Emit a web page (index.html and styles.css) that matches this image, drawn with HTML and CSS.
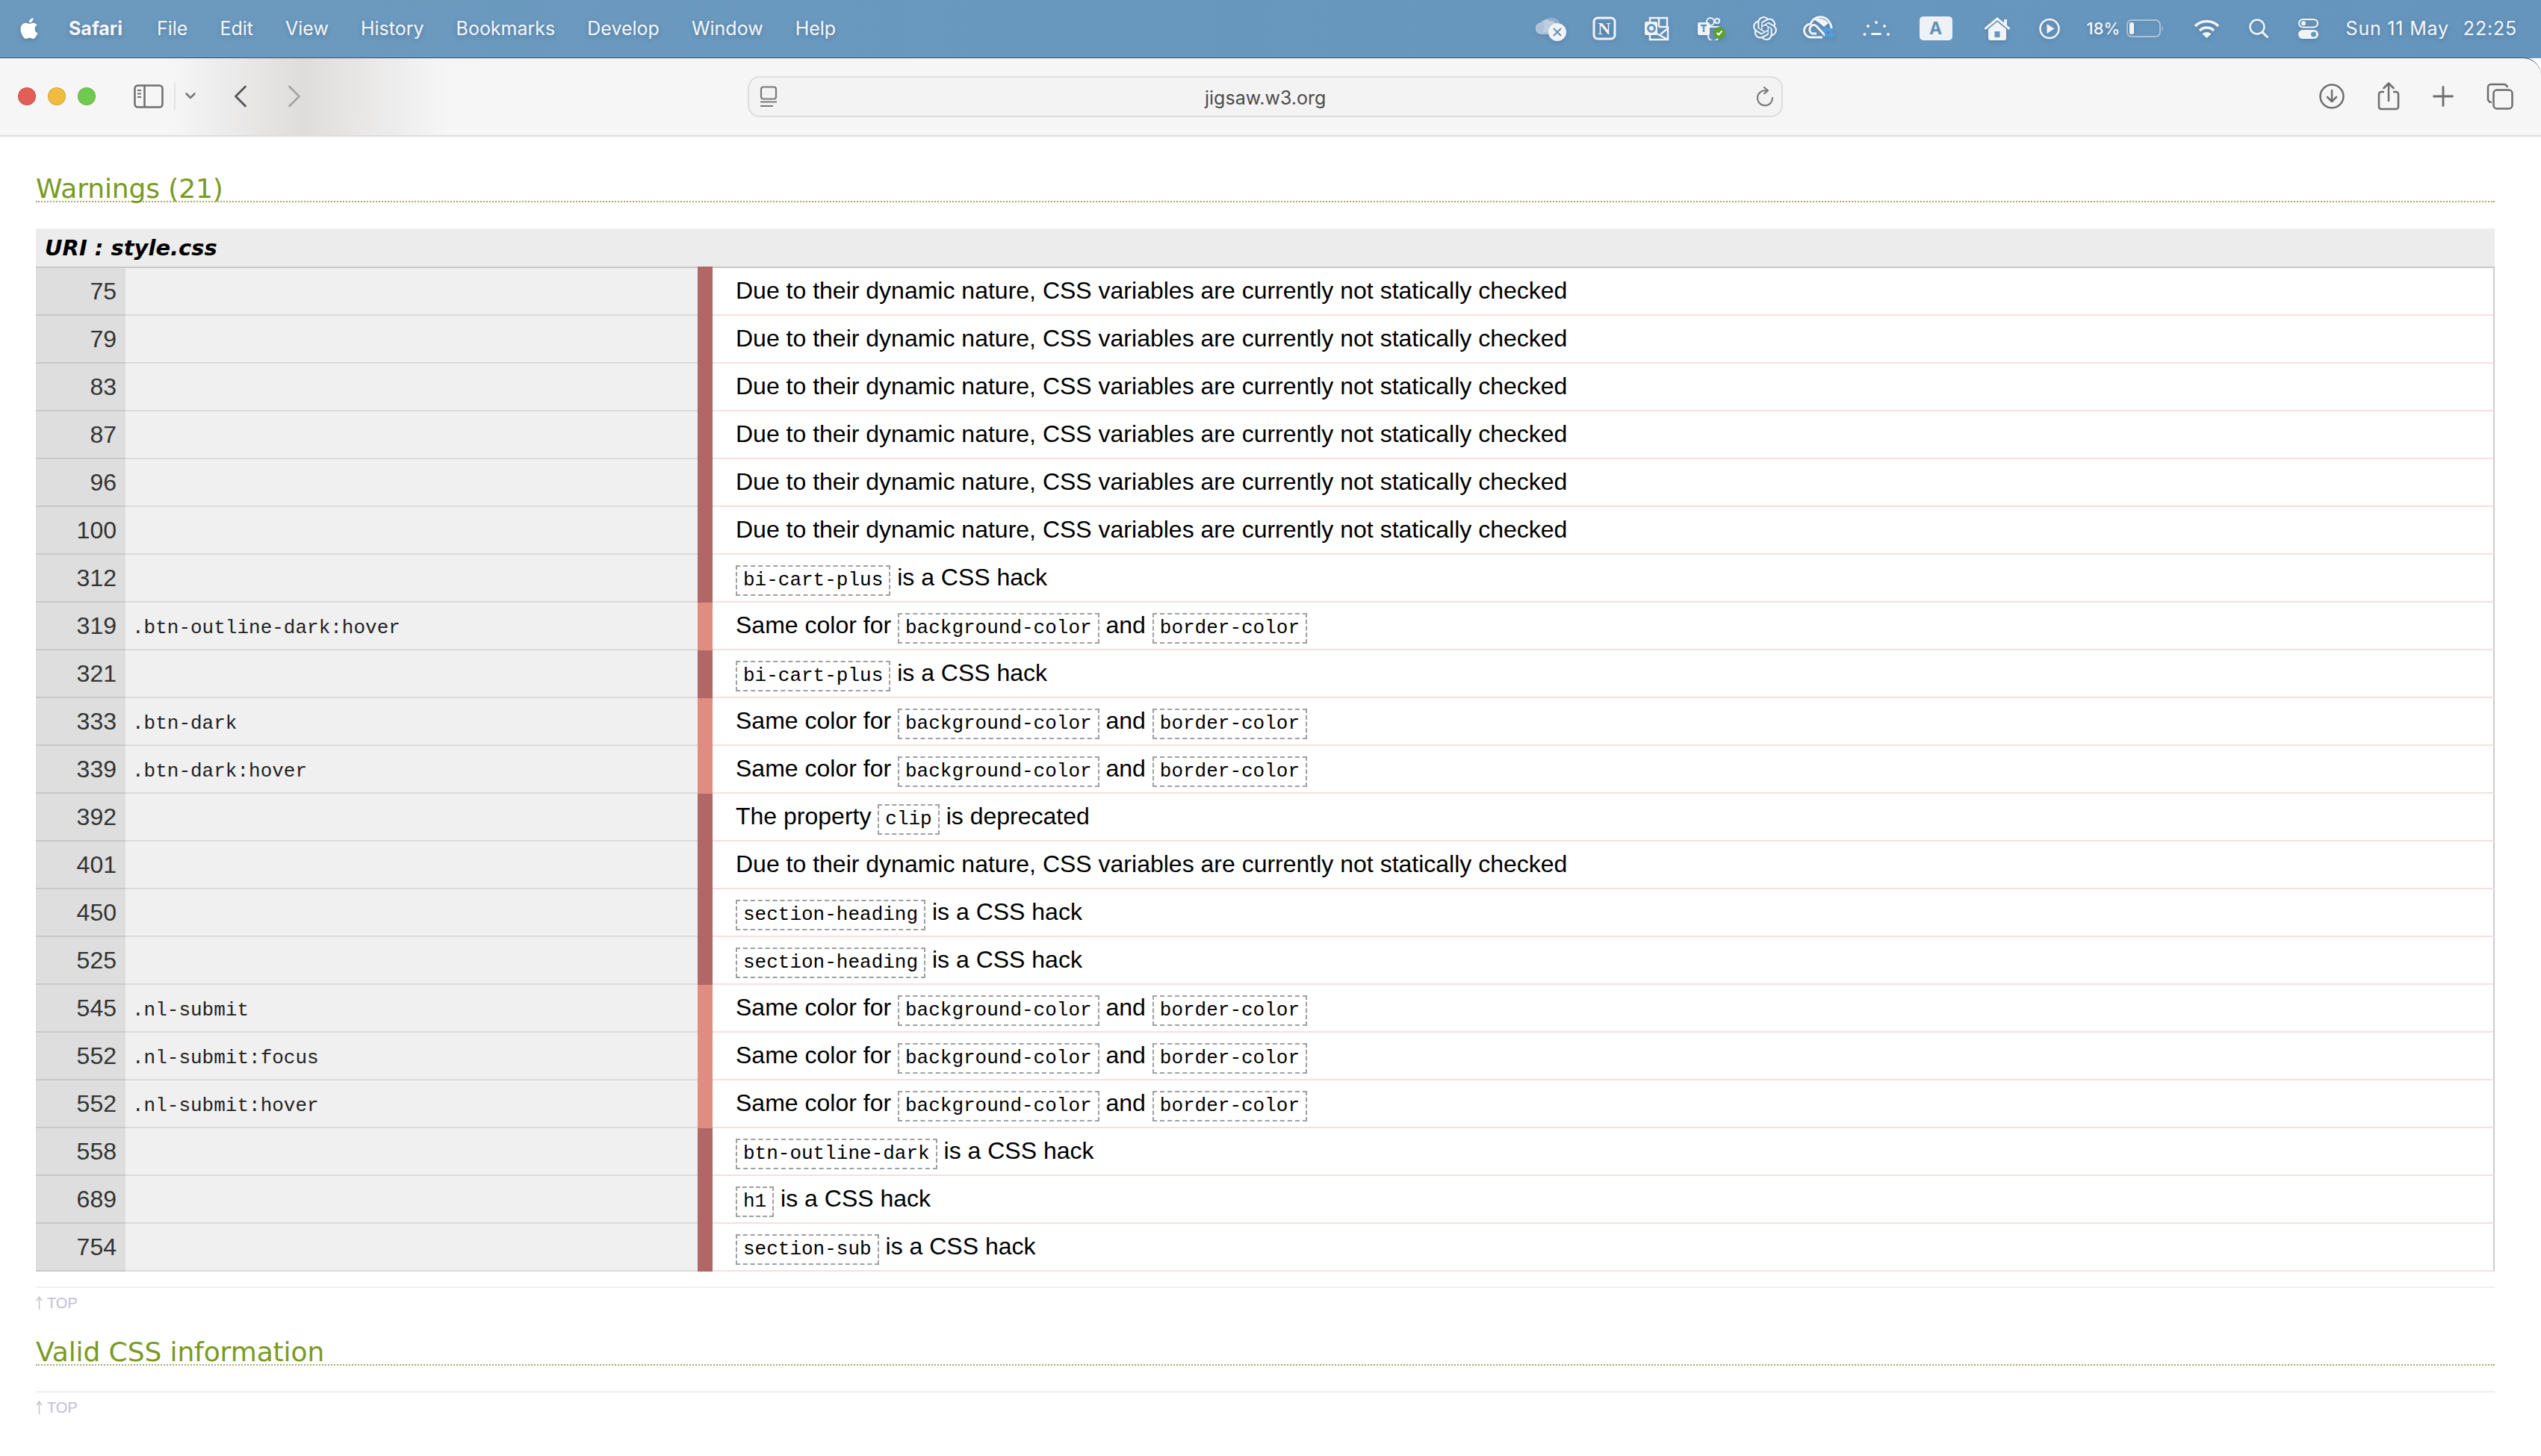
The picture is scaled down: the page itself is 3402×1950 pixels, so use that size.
FILE: index.html
```html
<!DOCTYPE html>
<html lang="en">
<head>
<meta charset="utf-8">
<title>W3C CSS Validator results</title>
<link rel="stylesheet" href="styles.css">
</head>
<body>
<header class="menubar">
  <nav class="menus">
    <svg class="apple" viewBox="0 0 24 24"><path fill="#fff" d="M12.152 6.896c-.948 0-2.415-1.078-3.96-1.04-2.04.027-3.91 1.183-4.961 3.014-2.117 3.675-.546 9.103 1.519 12.09 1.013 1.454 2.208 3.09 3.792 3.039 1.52-.065 2.09-.987 3.935-.987 1.831 0 2.35.987 3.96.948 1.637-.026 2.676-1.48 3.676-2.948 1.156-1.688 1.636-3.325 1.662-3.415-.039-.013-3.182-1.221-3.22-4.857-.026-3.04 2.48-4.494 2.597-4.559-1.429-2.09-3.623-2.324-4.39-2.376-2-.156-3.675 1.09-4.61 1.09zM15.53 3.83c.843-1.012 1.4-2.427 1.245-3.83-1.207.052-2.662.805-3.532 1.818-.78.896-1.454 2.338-1.273 3.714 1.338.104 2.715-.688 3.559-1.701"/></svg>
    <span class="app">Safari</span>
    <span>File</span><span>Edit</span><span>View</span><span>History</span><span>Bookmarks</span><span>Develop</span><span>Window</span><span>Help</span>
  </nav>
  <div class="status">
    <svg width="42" height="36" viewBox="0 0 42 36"><path fill="#dfe8f0" opacity=".35" d="M12 8a11 9 0 0 1 20 2l-6 13H10z"/><path fill="#dfe8f0" opacity=".6" d="M8 26a8 8 0 0 1-1-16 8 8 0 0 1 12-2 9 9 0 0 1 10 8v10z"/><circle cx="29" cy="23" r="12" fill="#f1f4f7"/><path d="M24 18l10 10M34 18l-10 10" stroke="#6a8eab" stroke-width="2" fill="none"/></svg>
    <svg width="32" height="32" viewBox="0 0 32 32"><rect x="2" y="2" width="28" height="28" rx="5" fill="none" stroke="#f1f4f7" stroke-width="3"/><text x="16" y="24" class="svg-n">N</text></svg>
    <svg width="33" height="33" viewBox="0 0 33 33"><path fill="none" stroke="#f1f4f7" stroke-width="2.500" d="M7 8V2h23v12M19 2v12M7 20v11h24V14H19M14 22l17 9M31 16L21 24"/><rect x="0" y="7" width="17" height="18" rx="2" fill="#f1f4f7"/><circle cx="9" cy="16" r="4.500" fill="none" stroke="#6595bd" stroke-width="3"/></svg>
    <svg width="38" height="32" viewBox="0 0 38 32"><circle cx="17" cy="7" r="5" fill="none" stroke="#f1f4f7" stroke-width="2"/><circle cx="26" cy="6" r="3" fill="none" stroke="#f1f4f7" stroke-width="2"/><path d="M14 14h14v12a7 7 0 0 1-14 0z" fill="none" stroke="#f1f4f7" stroke-width="2"/><rect x="0" y="8" width="16" height="17" rx="2" fill="#f1f4f7"/><path d="M4 12h8M8 12v9" stroke="#6595bd" stroke-width="2.500"/><circle cx="29" cy="22" r="8" fill="#5aa02c"/><path d="M25.500 22l2.500 2.500 4.500-5" stroke="#fff" stroke-width="2" fill="none"/></svg>
    <svg width="32" height="32" viewBox="0 0 24 24"><path fill="#f1f4f7" d="M22.2819 9.8211a5.9847 5.9847 0 0 0-.5157-4.9108 6.0462 6.0462 0 0 0-6.5098-2.9A6.0651 6.0651 0 0 0 4.9807 4.1818a5.9847 5.9847 0 0 0-3.9977 2.9 6.0462 6.0462 0 0 0 .7427 7.0966 5.98 5.98 0 0 0 .511 4.9107 6.051 6.051 0 0 0 6.5146 2.9001A5.9847 5.9847 0 0 0 13.2599 24a6.0557 6.0557 0 0 0 5.7718-4.2058 5.9894 5.9894 0 0 0 3.9977-2.9001 6.0557 6.0557 0 0 0-.7475-7.0729zm-9.022 12.6081a4.4755 4.4755 0 0 1-2.8764-1.0408l.1419-.0804 4.7783-2.7582a.7948.7948 0 0 0 .3927-.6813v-6.7369l2.02 1.1686a.071.071 0 0 1 .038.052v5.5826a4.504 4.504 0 0 1-4.4945 4.4944zm-9.6607-4.1254a4.4708 4.4708 0 0 1-.5346-3.0137l.142.0852 4.783 2.7582a.7712.7712 0 0 0 .7806 0l5.8428-3.3685v2.3324a.0804.0804 0 0 1-.0332.0615L9.74 19.9502a4.4992 4.4992 0 0 1-6.1408-1.6464zM2.3408 7.8956a4.485 4.485 0 0 1 2.3655-1.9728V11.6a.7664.7664 0 0 0 .3879.6765l5.8144 3.3543-2.0201 1.1685a.0757.0757 0 0 1-.071 0l-4.8303-2.7865A4.504 4.504 0 0 1 2.3408 7.872zm16.5963 3.8558L13.1038 8.364 15.1192 7.2a.0757.0757 0 0 1 .071 0l4.8303 2.7913a4.4944 4.4944 0 0 1-.6765 8.1042v-5.6772a.79.79 0 0 0-.407-.667zm2.0107-3.0231l-.142-.0852-4.7735-2.7818a.7759.7759 0 0 0-.7854 0L9.409 9.2297V6.8974a.0662.0662 0 0 1 .0284-.0615l4.8303-2.7866a4.4992 4.4992 0 0 1 6.6802 4.66zM8.3065 12.863l-2.02-1.1638a.0804.0804 0 0 1-.038-.0567V6.0742a4.4992 4.4992 0 0 1 7.3757-3.4537l-.142.0805L8.704 5.459a.7948.7948 0 0 0-.3927.6813zm1.0976-2.3654l2.602-1.4998 2.6069 1.4998v2.9994l-2.5974 1.4997-2.6067-1.4997Z"/></svg>
    <svg width="46" height="34" viewBox="0 0 46 34"><path fill="none" stroke="#f1f4f7" stroke-width="3" d="M26 29H11a9 9 0 0 1-1-18 14 14 0 0 1 26-1q2 3 2 7"/><path fill="none" stroke="#f1f4f7" stroke-width="3" d="M30 27L18 14a5 5 0 0 0-8 1 6 6 0 0 0 2 9h6"/><path fill="#f1f4f7" d="M14 5q8-3 16 1l4 4-6 5-6-5q-4-3-8-5z"/><path fill="#4f9fdc" d="M32 14l-8 5 8 5v-3h8v-4h-8zM36 20v4h-7v4h7v3l8-5z"/></svg>
    <svg width="36" height="22" viewBox="0 0 36 22"><g fill="#f1f4f7"><circle cx="2.500" cy="19" r="2"/><circle cx="7" cy="8" r="2"/><circle cx="18" cy="3" r="2"/><circle cx="29" cy="8" r="2"/><circle cx="34" cy="19" r="2"/><rect x="11" y="17" width="14" height="3" rx="1.500"/></g></svg>
    <span class="abc">A</span>
    <svg width="34" height="31" viewBox="0 0 34 31"><path fill="none" stroke="#f1f4f7" stroke-width="3" stroke-linecap="round" d="M1.500 15L17 2l15.500 13"/><path fill="#f1f4f7" d="M26 3h4v9l-4-3zM5 16L17 6l12 10v12a3 3 0 0 1-3 3H8a3 3 0 0 1-3-3z"/><rect x="13.500" y="19" width="7" height="8" fill="#6595bd"/></svg>
    <svg width="28" height="29" viewBox="0 0 28 29"><circle cx="14" cy="14.500" r="12.500" fill="none" stroke="#f1f4f7" stroke-width="2.500"/><path fill="#f1f4f7" d="M10.500 8l10 6.500-10 6.500z"/></svg>
    <span class="pct">18%</span>
    <svg width="51" height="24" viewBox="0 0 51 24"><rect x="1" y="1" width="44" height="22" rx="6" fill="none" stroke="#f1f4f7" stroke-opacity=".5" stroke-width="2"/><rect x="4" y="4" width="6" height="16" rx="2.500" fill="#f1f4f7"/><path d="M47.500 8.500q3 3.500 0 7z" fill="#f1f4f7" fill-opacity=".6"/></svg>
    <svg width="35" height="25" viewBox="0 0 35 25"><g fill="none" stroke="#f1f4f7" stroke-width="3.500"><path d="M2 9a22 22 0 0 1 31 0"/><path d="M8 15a13.500 13.500 0 0 1 19 0"/></g><path fill="#f1f4f7" d="M17.500 25l-6-5.500a8.500 8.500 0 0 1 12 0z"/></svg>
    <svg width="26" height="26" viewBox="0 0 26 26"><circle cx="11" cy="11" r="9.500" fill="none" stroke="#f1f4f7" stroke-width="2.500"/><path d="M18 18l6.500 6.500" stroke="#f1f4f7" stroke-width="3" stroke-linecap="round"/></svg>
    <svg width="27" height="27" viewBox="0 0 27 27"><rect x="1" y="1" width="25" height="10.500" rx="5.250" fill="none" stroke="#f1f4f7" stroke-width="2"/><circle cx="7" cy="6.250" r="3" fill="#f1f4f7"/><rect y="15" width="27" height="12" rx="6" fill="#f1f4f7"/><circle cx="20.500" cy="21" r="3.500" fill="#6595bd"/></svg>
    <time class="clock"><span>Sun 11 May</span><span>22:25</span></time>
  </div>
</header>

<div class="toolbar">
  <div class="lights"><i class="light red"></i><i class="light yellow"></i><i class="light green"></i></div>
  <svg class="side" width="40" height="32" viewBox="0 0 40 32"><rect x="1.500" y="1.500" width="37" height="29" rx="4" fill="none" stroke="#6e6e6e" stroke-width="2.500"/><path d="M14.500 2v28" stroke="#6e6e6e" stroke-width="2.500"/><path d="M5 8h5M5 12.500h5M5 17h5" stroke="#6e6e6e" stroke-width="2"/></svg>
  <span class="divider"></span>
  <svg class="chev" width="14" height="9" viewBox="0 0 14 9"><path d="M1.500 1.500L7 7l5.500-5.500" fill="none" stroke="#777" stroke-width="2.500" stroke-linecap="round" stroke-linejoin="round"/></svg>
  <svg class="back" width="18" height="30" viewBox="0 0 18 30"><path d="M15.500 2L2.500 15l13 13" fill="none" stroke="#555" stroke-width="2.800" stroke-linecap="round" stroke-linejoin="round"/></svg>
  <svg class="fwd" width="18" height="30" viewBox="0 0 18 30"><path d="M2.500 2l13 13-13 13" fill="none" stroke="#a6a6a6" stroke-width="2.800" stroke-linecap="round" stroke-linejoin="round"/></svg>
  <div class="address">
    <svg class="page" width="24" height="30" viewBox="0 0 24 30"><rect x="2" y="1.500" width="20" height="16" rx="3" fill="none" stroke="#7a7a7a" stroke-width="2.200"/><path d="M1 21.500h22" stroke="#7a7a7a" stroke-width="2"/><path d="M1 27h17" stroke="#7a7a7a" stroke-width="2"/></svg>
    <span class="url">jigsaw.w3.org</span>
    <svg class="reload" width="24" height="28" viewBox="0 0 24 28"><path d="M14 5.500A10 10 0 1 0 22 15" fill="none" stroke="#777" stroke-width="2" stroke-linecap="round"/><path d="M11 1l5 4.500-5 4" fill="none" stroke="#777" stroke-width="2" stroke-linecap="round" stroke-linejoin="round"/></svg>
  </div>
  <div class="actions">
    <svg width="34" height="34" viewBox="0 0 34 34"><circle cx="17" cy="17" r="15.500" fill="none" stroke="#6e6e6e" stroke-width="2.500"/><path d="M17 9v15M11 18l6 6 6-6" fill="none" stroke="#6e6e6e" stroke-width="2.500" stroke-linecap="round" stroke-linejoin="round"/></svg>
    <svg width="30" height="38" viewBox="0 0 30 38"><path d="M9 13H5a3 3 0 0 0-3 3v17a3 3 0 0 0 3 3h20a3 3 0 0 0 3-3V16a3 3 0 0 0-3-3h-4" fill="none" stroke="#6e6e6e" stroke-width="2.500"/><path d="M15 25V2M8.500 8L15 1.500 21.500 8" fill="none" stroke="#6e6e6e" stroke-width="2.500" stroke-linecap="round" stroke-linejoin="round"/></svg>
    <svg width="28" height="28" viewBox="0 0 28 28"><path d="M14 1.500v25M1.500 14h25" stroke="#6e6e6e" stroke-width="2.800" stroke-linecap="round"/></svg>
    <svg width="36" height="36" viewBox="0 0 36 36"><path d="M7 26a5 5 0 0 1-5-4V6a4 4 0 0 1 4-4h18a5 5 0 0 1 4 4" fill="none" stroke="#6e6e6e" stroke-width="2.500"/><rect x="9.500" y="9.500" width="25" height="25" rx="4.500" fill="none" stroke="#6e6e6e" stroke-width="2.500"/></svg>
  </div>
</div>

<main class="page-body">
  <h2 class="section-title warn-title">Warnings (21)</h2>
  <table class="warnings">
    <colgroup><col class="c-line"><col class="c-sel"><col class="c-bar"><col></colgroup>
    <thead><tr><th colspan="4">URI : style.css</th></tr></thead>
    <tbody>
      <tr><td class="num">75</td><td class="sel"></td><td class="bar high"></td><td class="msg">Due to their dynamic nature, CSS variables are currently not statically checked</td></tr>
      <tr><td class="num">79</td><td class="sel"></td><td class="bar high"></td><td class="msg">Due to their dynamic nature, CSS variables are currently not statically checked</td></tr>
      <tr><td class="num">83</td><td class="sel"></td><td class="bar high"></td><td class="msg">Due to their dynamic nature, CSS variables are currently not statically checked</td></tr>
      <tr><td class="num">87</td><td class="sel"></td><td class="bar high"></td><td class="msg">Due to their dynamic nature, CSS variables are currently not statically checked</td></tr>
      <tr><td class="num">96</td><td class="sel"></td><td class="bar high"></td><td class="msg">Due to their dynamic nature, CSS variables are currently not statically checked</td></tr>
      <tr><td class="num">100</td><td class="sel"></td><td class="bar high"></td><td class="msg">Due to their dynamic nature, CSS variables are currently not statically checked</td></tr>
      <tr><td class="num">312</td><td class="sel"></td><td class="bar high"></td><td class="msg"><code>bi-cart-plus</code> is a CSS hack</td></tr>
      <tr><td class="num">319</td><td class="sel">.btn-outline-dark:hover</td><td class="bar low"></td><td class="msg">Same color for <code>background-color</code> and <code>border-color</code></td></tr>
      <tr><td class="num">321</td><td class="sel"></td><td class="bar high"></td><td class="msg"><code>bi-cart-plus</code> is a CSS hack</td></tr>
      <tr><td class="num">333</td><td class="sel">.btn-dark</td><td class="bar low"></td><td class="msg">Same color for <code>background-color</code> and <code>border-color</code></td></tr>
      <tr><td class="num">339</td><td class="sel">.btn-dark:hover</td><td class="bar low"></td><td class="msg">Same color for <code>background-color</code> and <code>border-color</code></td></tr>
      <tr><td class="num">392</td><td class="sel"></td><td class="bar high"></td><td class="msg">The property <code>clip</code> is deprecated</td></tr>
      <tr><td class="num">401</td><td class="sel"></td><td class="bar high"></td><td class="msg">Due to their dynamic nature, CSS variables are currently not statically checked</td></tr>
      <tr><td class="num">450</td><td class="sel"></td><td class="bar high"></td><td class="msg"><code>section-heading</code> is a CSS hack</td></tr>
      <tr><td class="num">525</td><td class="sel"></td><td class="bar high"></td><td class="msg"><code>section-heading</code> is a CSS hack</td></tr>
      <tr><td class="num">545</td><td class="sel">.nl-submit</td><td class="bar low"></td><td class="msg">Same color for <code>background-color</code> and <code>border-color</code></td></tr>
      <tr><td class="num">552</td><td class="sel">.nl-submit:focus</td><td class="bar low"></td><td class="msg">Same color for <code>background-color</code> and <code>border-color</code></td></tr>
      <tr><td class="num">552</td><td class="sel">.nl-submit:hover</td><td class="bar low"></td><td class="msg">Same color for <code>background-color</code> and <code>border-color</code></td></tr>
      <tr><td class="num">558</td><td class="sel"></td><td class="bar high"></td><td class="msg"><code>btn-outline-dark</code> is a CSS hack</td></tr>
      <tr><td class="num">689</td><td class="sel"></td><td class="bar high"></td><td class="msg"><code>h1</code> is a CSS hack</td></tr>
      <tr><td class="num">754</td><td class="sel"></td><td class="bar high"></td><td class="msg"><code>section-sub</code> is a CSS hack</td></tr>
    </tbody>
  </table>
  <hr class="rule first-rule">
  <a class="top-link"><svg class="up" width="9" height="18" viewBox="0 0 9 18"><path d="M4.500 18V1M1 6l3.500-5L8 6" fill="none" stroke="#c4c4d4" stroke-width="1.500"/></svg>TOP</a>
  <h2 class="section-title valid-title">Valid CSS information</h2>
  <hr class="rule second-rule">
  <a class="top-link"><svg class="up" width="9" height="18" viewBox="0 0 9 18"><path d="M4.500 18V1M1 6l3.500-5L8 6" fill="none" stroke="#c4c4d4" stroke-width="1.500"/></svg>TOP</a>
</main>
</body>
</html>
```

FILE: styles.css
```css
* { box-sizing: border-box; }
html, body { margin: 0; padding: 0; background: #fff; }
body { width: 3402px; height: 1950px; overflow: hidden; font-family: "Liberation Sans", Arial, sans-serif; }

.menubar {
  height: 78px;
  display: flex;
  align-items: center;
  justify-content: space-between;
  padding: 0 32px 2px 25px;
  background: linear-gradient(90deg, #6c9abf, #6595bd);
  color: #f4f7fa;
  font-family: Inter, "Liberation Sans", sans-serif;
  font-size: 25px;
  text-shadow: 0 2px 6px rgba(30, 50, 80, .3);
}
.menus { display: flex; align-items: center; gap: 43px; }
.apple { width: 28px; height: 32px; margin-right: -4px; filter: drop-shadow(0 2px 3px rgba(30, 50, 80, .3)); }
.app { font-weight: 700; margin-right: 3px; }

.status {
  display: grid;
  grid-template-columns: 76px 70px 71px 74px 67px 80px 76px 87px 73px 64px 53px 90px 74px 66px 64px auto;
  align-items: center;
  justify-items: start;
}
.status svg { display: block; filter: drop-shadow(0 2px 3px rgba(30, 50, 80, .22)); }
.abc {
  width: 44px; height: 32px;
  display: flex; align-items: center; justify-content: center;
  border-radius: 5px;
  background: #eef2f6;
  color: #6390b4;
  font-weight: 700;
  font-size: 23px;
  text-shadow: none;
}
.pct { font-size: 22px; font-weight: 500; }
.svg-n { font: 700 24px "Liberation Serif", serif; fill: #f1f4f7; text-anchor: middle; }
.clock { display: flex; gap: 19px; letter-spacing: .8px; }

.toolbar {
  position: relative;
  height: 106px;
  margin-top: -1px;
  display: flex;
  align-items: center;
  padding: 0 37px 2px 24px;
  border-top: 1px solid #3d4d5e;
  border-bottom: 2px solid #ddd;
  border-top-right-radius: 24px;
  background:
    linear-gradient(90deg, rgba(223, 221, 220, 0) 230px, #dfdddc 405px, rgba(223, 221, 220, 0) 600px),
    #f6f6f6;
}
.lights { display: flex; gap: 16px; }
.light { width: 24px; height: 24px; border-radius: 50%; display: block; border: 1px solid rgba(0, 0, 0, .12); }
.red { background: #e25f58; }
.yellow { background: #f0bb3e; }
.green { background: #72c94f; }
.side { margin-left: 51px; }
.divider { width: 2px; height: 36px; margin-left: 14px; background: #e3e3e3; }
.chev { margin-left: 13px; }
.back { margin-left: 51px; }
.fwd { margin-left: 54px; }

.address {
  position: absolute;
  left: 1001px;
  top: 24px;
  width: 1386px;
  height: 55px;
  display: flex;
  align-items: center;
  justify-content: space-between;
  padding: 0 10px 0 14px;
  border: 2px solid #ddd;
  border-radius: 16px;
  background: #f3f3f3;
}
.url {
  position: absolute;
  left: 610px;
  top: 12px;
  font-family: Inter, "Liberation Sans", sans-serif;
  font-size: 25px;
  color: #4c4c4c;
}
.actions { margin-left: auto; display: flex; align-items: center; gap: 44px; }

.page-body { padding: 0 62px 0 48px; }
.section-title {
  margin: 0;
  font-family: "DejaVu Sans", Verdana, sans-serif;
  font-weight: 400;
  font-size: 36px;
  line-height: 33px;
  letter-spacing: -.1px;
  color: #7a9a22;
  border-bottom: 2px dotted #a8a86c;
}
.warn-title { margin-top: 53px; }
.valid-title { margin-top: 37px; }

.warnings {
  width: 100%;
  margin-top: 35px;
  table-layout: fixed;
  border-collapse: separate;
  border-spacing: 0;
}
.c-line { width: 120px; }
.c-sel { width: 766px; }
.c-bar { width: 20px; }
.warnings th {
  height: 53px;
  padding: 0 12px;
  text-align: left;
  font-family: "DejaVu Sans", Verdana, sans-serif;
  font-size: 29px;
  font-style: italic;
  font-weight: 700;
  color: #000;
  background: #ececec;
  border-bottom: 2px solid #c8c8c8;
}
.warnings td { height: 64px; padding: 0; font-size: 32px; }
.warnings .num {
  padding-right: 12px;
  text-align: right;
  color: #333;
  background: #dedede;
  border-bottom: 2px solid #c8c8c8;
}
.warnings .sel {
  padding: 6px 0 0 9px;
  font-family: "Liberation Mono", "Courier New", monospace;
  font-size: 26px;
  color: #222;
  background: #f0f0f0;
  border-bottom: 2px solid #dcdcdc;
}
.high { background: #b36666; }
.low { background: #e08c80; }
tbody tr:first-child .bar { box-shadow: 0 -2px 0 #b36666; }
.warnings .msg {
  padding: 0 0 2px 31px;
  color: #000;
  border-right: 2px solid #ccc;
  border-bottom: 2px solid #f6dfe0;
}
code {
  display: inline-block;
  margin-top: 8px;
  padding: 4px 8px;
  font-family: "Liberation Mono", "Courier New", monospace;
  font-size: 26px;
  line-height: 29px;
  color: #000;
  border: 2px dashed #a0a0a0;
}

.rule { height: 2px; margin: 0; border: 0; background: #eeeefb; }
.first-rule { margin-top: 20px; }
.second-rule { margin-top: 34px; }
.top-link { display: flex; align-items: center; gap: 6px; height: 24px; margin-top: 8px; font-size: 20px; line-height: 24px; color: #c0c0d0; }
.up { display: block; }
```
